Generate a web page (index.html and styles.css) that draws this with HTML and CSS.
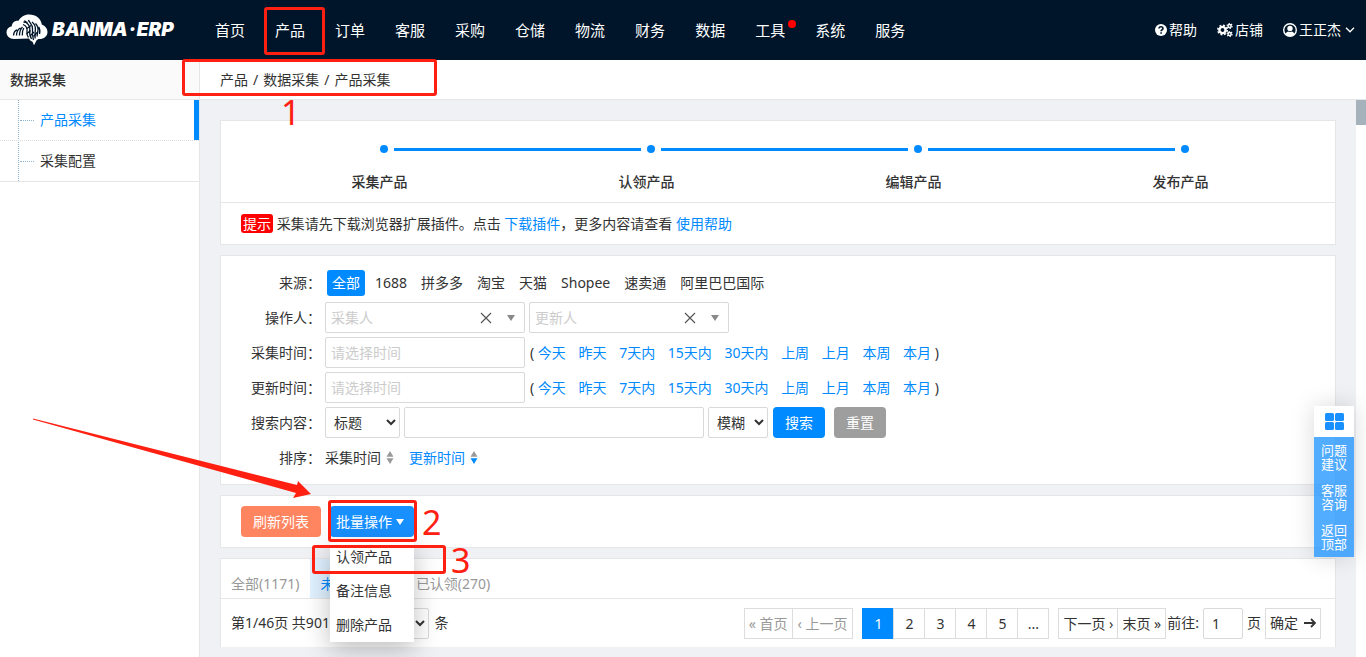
FILE: index.html
```html
<!DOCTYPE html>
<html lang="zh-CN">
<head>
<meta charset="utf-8">
<title>产品采集</title>
<meta name="viewport" content="width=device-width, initial-scale=1">
<link rel="stylesheet" href="styles.css">
</head>
<body>
<header class="topbar">
  <a class="logo" href="#">
    <svg class="logo-mark" viewBox="0 0 42 32" width="42" height="32" aria-hidden="true">
      <path fill="#fff" d="M8 25C3.500 25 .5 22 .5 18.300c0-3.300 2.300-5.300 5.300-6C6 8.500 9 6.300 12.500 6.800 14.500 3 18.500.5 23 .5c7 0 12 4 12.800 10 3.500 1.300 5.700 4 5.700 7.500 0 4.300-3.500 7-8 7-1.500 0-2 .5-3 1.500l-2.500 4.700-1.500-3.500-2-1-1.500-2.200z"/>
      <g fill="none" stroke="#001529" stroke-width="1.300">
        <path d="M7.500 21.500c.3-3.500 1.500-5 3.500-5.500M10.500 21.500c.2-4 1.500-6.500 4-7.500M13.500 21.500c0-3.500.8-6.500 3-8.500M16.300 21.500c-.3-3 .2-5.500 1.500-7.500"/>
        <path d="M17 10.500c3.500 1.500 4.500 4 4 7-.3 2.500.3 4.500 1.500 6M18.500 6.500c1 2.500 6 3.500 5.300 9-.5 3.500 0 6.500 1.700 9.500M22.500 6c.5 2.500 4.500 4 4 9-.3 4 0 7.500 1 11M26 8c2.500 2 3.800 4.500 3.300 8-.4 3-.2 5.500-.2 8.500M29.500 9.500c2.500 2.500 3 5 2.300 8-.5 2-.5 3.500-.8 5M32.500 13c1.500 2 1.800 4 1 7"/>
        <path d="M21 14.500l4-3M20.500 20l4-3.500M24 22l4-4M27.500 22.500l3.500-4M17.500 8l4 .5"/>
      </g>
    </svg>
    <span class="logo-text">BANMA<i>·</i>ERP</span>
  </a>
  <nav class="mainnav">
    <a href="#">首页</a><a href="#">产品</a><a href="#">订单</a><a href="#">客服</a><a href="#">采购</a><a href="#">仓储</a><a href="#">物流</a><a href="#">财务</a><a href="#">数据</a><a class="has-dot" href="#">工具</a><a href="#">系统</a><a href="#">服务</a>
  </nav>
  <div class="usernav">
    <a href="#"><svg viewBox="0 0 12 12" width="12" height="12" aria-hidden="true"><circle cx="6" cy="6" r="6" fill="#fff"/><path d="M4 4.600C4 3.300 4.900 2.700 6 2.700s2 .7 2 1.700C8 5.800 6.100 5.700 6.100 7.200M6.100 8.200v1.500" fill="none" stroke="#001529" stroke-width="1.600"/></svg>帮助</a>
    <a href="#"><svg viewBox="0 0 16 14" width="16" height="14" aria-hidden="true"><g fill="none" stroke="#fff"><circle cx="5.500" cy="7" r="3.100" stroke-width="2.400"/><circle cx="5.500" cy="7" r="4.700" stroke-width="1.600" stroke-dasharray="1.900 1.790"/><circle cx="12.600" cy="3" r="1.600" stroke-width="1.500"/><circle cx="12.600" cy="3" r="2.500" stroke-width="1.200" stroke-dasharray="1.200 1.420"/><circle cx="12.600" cy="11" r="1.600" stroke-width="1.500"/><circle cx="12.600" cy="11" r="2.500" stroke-width="1.200" stroke-dasharray="1.200 1.420"/></g></svg>店铺</a>
    <a href="#"><svg viewBox="0 0 14 14" width="14" height="14" aria-hidden="true"><circle cx="7" cy="7" r="6.300" fill="none" stroke="#fff" stroke-width="1.400"/><circle cx="7" cy="5.500" r="2.700" fill="#fff"/><path d="M2.500 11.200C3 9.200 4.500 8.600 5.300 8.400c1 .7 2.400.7 3.400 0 .8.200 2.300.8 2.800 2.800C9 14 5 14 2.500 11.200z" fill="#fff"/></svg>王正杰<svg class="chev" viewBox="0 0 10 6" width="10" height="6" aria-hidden="true"><path d="M1 .8l4 4 4-4" fill="none" stroke="#fff" stroke-width="1.300"/></svg></a>
  </div>
</header>
<div class="shell">
  <aside class="sidebar">
    <h2 class="side-title">数据采集</h2>
    <ul class="side-list">
      <li><a class="active" href="#">产品采集</a></li>
      <li><a href="#">采集配置</a></li>
    </ul>
  </aside>
  <main class="main">
    <div class="crumbs"><span>产品</span><span>/</span><span>数据采集</span><span>/</span><span>产品采集</span></div>
    <div class="scroller">
      <div class="content">
        <section class="card">
          <ol class="steps">
            <li><span class="track"></span>采集产品</li>
            <li><span class="track"></span>认领产品</li>
            <li><span class="track"></span>编辑产品</li>
            <li><span class="track last"></span>发布产品</li>
          </ol>
          <p class="tip"><span class="tag">提示</span> 采集请先下载浏览器扩展插件。点击 <a href="#">下载插件</a>，更多内容请查看 <a href="#">使用帮助</a></p>
        </section>

        <form class="card filters">
          <div class="row"><span class="label">来源：</span>
            <div class="sources"><a class="on" href="#">全部</a><a href="#">1688</a><a href="#">拼多多</a><a href="#">淘宝</a><a href="#">天猫</a><a href="#">Shopee</a><a href="#">速卖通</a><a href="#">阿里巴巴国际</a></div>
          </div>
          <div class="row"><label class="label" for="op">操作人：</label>
            <div class="combo"><input id="op" type="text" placeholder="采集人"><button type="button" aria-label="清除"><svg viewBox="0 0 12 12" width="12" height="12"><path d="M1 1l10 10M11 1L1 11" stroke="#555" stroke-width="1.200"/></svg></button><svg viewBox="0 0 8 6" width="8" height="6" aria-hidden="true"><path d="M0 0h8L4 6z" fill="#888"/></svg></div>
            <div class="combo"><input type="text" placeholder="更新人" aria-label="更新人"><button type="button" aria-label="清除"><svg viewBox="0 0 12 12" width="12" height="12"><path d="M1 1l10 10M11 1L1 11" stroke="#555" stroke-width="1.200"/></svg></button><svg viewBox="0 0 8 6" width="8" height="6" aria-hidden="true"><path d="M0 0h8L4 6z" fill="#888"/></svg></div>
          </div>
          <div class="row"><label class="label" for="t1">采集时间：</label>
            <input class="field date" id="t1" type="text" placeholder="请选择时间">
            <div class="quick">( <a href="#">今天</a> <a href="#">昨天</a> <a href="#">7天内</a> <a href="#">15天内</a> <a href="#">30天内</a> <a href="#">上周</a> <a href="#">上月</a> <a href="#">本周</a> <a href="#">本月</a> )</div>
          </div>
          <div class="row"><label class="label" for="t2">更新时间：</label>
            <input class="field date" id="t2" type="text" placeholder="请选择时间">
            <div class="quick">( <a href="#">今天</a> <a href="#">昨天</a> <a href="#">7天内</a> <a href="#">15天内</a> <a href="#">30天内</a> <a href="#">上周</a> <a href="#">上月</a> <a href="#">本周</a> <a href="#">本月</a> )</div>
          </div>
          <div class="row"><label class="label" for="q">搜索内容：</label>
            <select class="field by" aria-label="搜索字段"><option>标题</option></select>
            <input class="field query" id="q" type="text">
            <select class="field mode" aria-label="匹配方式"><option>模糊</option></select>
            <div class="actions"><button class="btn primary" type="button">搜索</button><button class="btn muted" type="button">重置</button></div>
          </div>
          <div class="row"><span class="label">排序：</span>
            <div class="sorts">
              <a class="plain" href="#">采集时间<svg viewBox="0 0 8 13" width="8" height="13" aria-hidden="true"><path d="M4 0l3.500 5.800h-7z" fill="#999"/><path d="M4 13l3.500-5.800h-7z" fill="#999"/></svg></a>
              <a href="#">更新时间<svg viewBox="0 0 8 13" width="8" height="13" aria-hidden="true"><path d="M4 0l3.500 5.800h-7z" fill="#999"/><path d="M4 13l3.500-5.800h-7z" fill="#008aff"/></svg></a>
            </div>
          </div>
        </form>

        <section class="card tools">
          <button class="btn refresh" type="button">刷新列表</button>
          <div class="dropdown">
            <button class="btn batch" type="button">批量操作<svg viewBox="0 0 8 6" width="8" height="6" aria-hidden="true"><path d="M0 0h8L4 6z" fill="#fff"/></svg></button>
            <div class="menu"><a href="#">认领产品</a><a href="#">备注信息</a><a href="#">删除产品</a></div>
          </div>
        </section>

        <section class="card listing">
          <nav class="tabs"><a href="#">全部(1171)</a><a class="on" href="#">未认领(901)</a><a href="#">已认领(270)</a></nav>
          <div class="pagebar">
            <div class="summary"><label for="size">第1/46页 共901条 每页</label><select class="field size" id="size"><option>20</option></select><span>条</span></div>
            <div class="pager">
              <div class="group off"><a href="#">« 首页</a><a href="#">‹ 上一页</a></div>
              <div class="group nums"><a class="on" href="#">1</a><a href="#">2</a><a href="#">3</a><a href="#">4</a><a href="#">5</a><a href="#">...</a></div>
              <div class="group last"><a href="#">下一页 ›</a><a href="#">末页 »</a></div>
              <div class="jump"><label for="go">前往:</label><input class="field" id="go" type="text" value="1"><span>页</span></div>
              <button class="confirm" type="button">确定<svg viewBox="0 0 12 10" width="12" height="10" aria-hidden="true"><path d="M0 5h11M7 1l4 4-4 4" fill="none" stroke="#333" stroke-width="1.800"/></svg></button>
            </div>
          </div>
        </section>
      </div>
      <div class="scrollbar"><div class="thumb"></div></div>
    </div>
  </main>
</div>

<div class="floatbar">
  <button class="grid-btn" type="button" aria-label="菜单"><svg viewBox="0 0 19 17" width="19" height="17"><g fill="#1890ff"><rect x="0" y="0" width="9" height="8" rx="1.500"/><rect x="10" y="0" width="9" height="8" rx="1.500"/><rect x="0" y="9" width="9" height="8" rx="1.500"/><rect x="10" y="9" width="9" height="8" rx="1.500"/></g></svg></button>
  <a href="#">问题<br>建议</a><a href="#">客服<br>咨询</a><a href="#">返回<br>顶部</a>
</div>

<div class="mark mark-nav"></div>
<div class="mark mark-crumbs"></div>
<div class="mark mark-batch"></div>
<div class="mark mark-claim"></div>
<span class="num num-1">1</span>
<span class="num num-2">2</span>
<span class="num num-3">3</span>
<svg class="arrow" viewBox="0 0 280 82" width="280" height="82" aria-hidden="true"><path fill="#ff2012" d="M0 .5L264 67l1-4 13 13-18 4 3-5L0 1.500z"/></svg>
</body>
</html>
```

FILE: styles.css
```css
* { box-sizing: border-box; }
body {
  margin: 0;
  height: 100vh;
  display: flex;
  flex-direction: column;
  overflow: hidden;
  position: relative;
  background: #fff;
  color: #333;
  font: 14px/20px "Noto Sans", "Noto Sans CJK SC", sans-serif;
}
a { color: #008aff; text-decoration: none; }
input, select, button { font: inherit; color: inherit; margin: 0; }
button { border: 0; padding: 0; background: none; cursor: pointer; }
ul, ol { list-style: none; margin: 0; padding: 0; }
svg { flex: none; }

.topbar { flex: none; height: 60px; display: flex; align-items: center; background: #001529; }
.logo { width: 200px; padding-left: 6px; display: flex; align-items: center; gap: 4px; }
.logo-text { color: #fff; font: italic 900 19px/24px Inter, sans-serif; }
.logo-text i { margin: 0 1px; }
.mainnav { display: flex; }
.mainnav a { padding: 0 15px; color: #fff; font-size: 15px; line-height: 60px; position: relative; }
.has-dot::after { content: ""; position: absolute; top: 20px; right: 4px; width: 8px; height: 8px; border-radius: 50%; background: #f00; }
.usernav { margin-left: auto; padding-right: 11px; display: flex; gap: 20px; }
.usernav a { display: flex; align-items: center; gap: 2px; color: #fff; }
.usernav .chev { margin-left: 2px; }

.shell { flex: 1; min-height: 0; display: flex; }
.sidebar { flex: none; width: 200px; border-right: 1px solid #e6e6e6; }
.side-title { margin: 0; padding-left: 10px; height: 40px; font-size: 14px; line-height: 39px; font-weight: 500; background: #fafafa; border-bottom: 1px solid #e6e6e6; }
.side-list { border-bottom: 1px solid #e6e6e6; background: linear-gradient(#8db4d0 50%, #fff 50%) 18px 0 / 1px 2px repeat-y; }
.side-list a { display: flex; align-items: center; gap: 6px; height: 40px; padding-left: 20px; color: #333; }
.side-list li + li { border-top: 1px dotted #ddd; }
.side-list a::before { content: ""; width: 14px; border-top: 1px dotted #8db4d0; }
.side-list a.active { color: #008aff; border-right: 5px solid #008aff; }

.main { flex: 1; min-width: 0; display: flex; flex-direction: column; }
.crumbs { flex: none; display: flex; gap: 5px; height: 40px; padding-left: 20px; line-height: 39px; border-bottom: 1px solid #e6e6e6; }
.scroller { flex: 1; min-height: 0; display: flex; background: #f0f1f5; }
.content { flex: 1; min-width: 0; padding: 20px 20px 10px; display: flex; flex-direction: column; gap: 10px; }
.scrollbar { flex: none; width: 10px; background: #fff; }
.thumb { height: 25px; background: #a6b2bb; }
.card { background: #fff; border: 1px solid #e6e6e6; }

.steps { display: grid; grid-template-columns: repeat(4, 1fr); padding: 24px 21px 10px 25px; border-bottom: 1px solid #e6e6e6; text-align: center; font-weight: 500; }
.track { display: flex; align-items: center; gap: 6px; width: 100%; height: 8px; margin: 0 0 19px 50%; }
.track::before { content: ""; width: 8px; height: 8px; border-radius: 50%; background: #008aff; }
.track::after { content: ""; flex: 1; height: 3px; margin-right: 6px; background: #008aff; }
.track.last { width: 8px; }
.track.last::after { display: none; }
.tip { margin: 0; padding: 11px 20px 10px; }
.tag { display: inline-block; padding: 0 2px; line-height: 19px; color: #fff; background: #f00; border-radius: 3px; }

.filters { padding: 9px 0; }
.row { display: flex; align-items: center; gap: 4px; height: 35px; }
.label { flex: none; width: 100px; text-align: right; }
.sources { display: flex; gap: 4px; padding-left: 2px; }
.sources a { padding: 0 5px; line-height: 26px; color: #333; border-radius: 3px; }
.sources .on { margin-right: 1px; color: #fff; background: #008aff; }
.field, .combo { height: 31px; border: 1px solid #d9d9d9; border-radius: 2px; background: #fff; }
.combo { width: 200px; display: flex; align-items: center; padding: 0 9px 0 5px; }
.combo input { flex: 1; min-width: 0; border: 0; padding: 0; background: none; outline: 0; }
.combo button { display: flex; margin-right: 15px; }
::placeholder { color: #ccc; opacity: 1; }
.date { width: 200px; padding: 0 5px; }
.quick { padding-left: 1px; white-space: nowrap; }
.quick a + a { margin-left: 9px; }
.by { width: 75px; padding: 0 4px; }
.query { width: 300px; }
.mode { width: 60px; padding: 0 4px; }
.actions { display: flex; gap: 9px; padding-left: 1px; }
.btn { height: 31px; padding: 0 12px; border-radius: 4px; color: #fff; white-space: nowrap; }
.primary { background: #008aff; }
.muted { background: #9e9e9e; }
.sorts { display: flex; gap: 15px; }
.sorts a { display: flex; align-items: center; gap: 5px; }
.sorts .plain { color: #333; }

.tools { display: flex; gap: 9px; padding: 10px 20px; }
.refresh { background: #ff8560; }
.dropdown { position: relative; }
.batch { display: flex; align-items: center; gap: 4px; padding: 0 10px 0 6px; background: #1890ff; }
.menu { position: absolute; z-index: 2; top: 34px; left: 0; width: 84px; background: #fff; box-shadow: 0 8px 24px rgba(0, 0, 0, .25); }
.menu a { display: block; padding-left: 6px; line-height: 34px; color: #333; }

.listing { border-bottom: 0; }
.tabs { display: flex; border-bottom: 1px solid #e6e6e6; }
.tabs a { padding: 10px 11px 0 10px; line-height: 29px; color: #999; }
.tabs .on { color: #008aff; background: #e0f1ff; }
.pagebar { display: flex; justify-content: space-between; align-items: center; height: 48px; padding: 0 14px 0 10px; }
.summary { display: flex; align-items: center; gap: 6px; }
.size { width: 47px; }
.pager { display: flex; align-items: center; white-space: nowrap; }
.group { display: flex; margin-right: 9px; }
.group a { border: 1px solid #ddd; padding: 0 4px; line-height: 29px; color: #333; }
.group a + a { margin-left: -1px; }
.group.off a { padding: 0 5px 0 4px; color: #999; }
.nums a { min-width: 32px; text-align: center; }
.nums .on { color: #fff; background: #008aff; border-color: #008aff; }
.group.last { margin-right: 1px; }
.jump { display: flex; align-items: center; gap: 4px; margin-right: 4px; }
.jump input { width: 40px; padding: 0 8px; }
.confirm { display: flex; align-items: center; gap: 6px; height: 31px; padding: 0 4px; border: 1px solid #ddd; }

.floatbar { position: absolute; z-index: 3; top: 406px; right: 12px; width: 40px; box-shadow: 0 0 24px rgba(0, 0, 0, .15); }
.grid-btn { display: flex; align-items: center; justify-content: center; width: 40px; height: 31px; background: #fff; }
.floatbar a { display: block; height: 40px; padding-top: 6px; text-align: center; font-size: 13px; line-height: 14px; color: #fff; background: rgba(24, 144, 255, .75); }

.mark { position: absolute; z-index: 4; border: 3px solid #ff2012; border-radius: 3px; pointer-events: none; }
.mark-nav { left: 264px; top: 7px; width: 61px; height: 48px; }
.mark-crumbs { left: 182px; top: 59px; width: 255px; height: 37px; }
.mark-batch { left: 328px; top: 500px; width: 89px; height: 42px; }
.mark-claim { left: 312px; top: 545px; width: 134px; height: 29px; }
.num { position: absolute; z-index: 4; color: #ff2012; font-size: 34px; line-height: 36px; }
.num-1 { left: 281px; top: 94px; }
.num-2 { left: 422px; top: 504px; }
.num-3 { left: 451px; top: 542px; }
.arrow { position: absolute; z-index: 4; left: 33px; top: 418px; pointer-events: none; }
```
